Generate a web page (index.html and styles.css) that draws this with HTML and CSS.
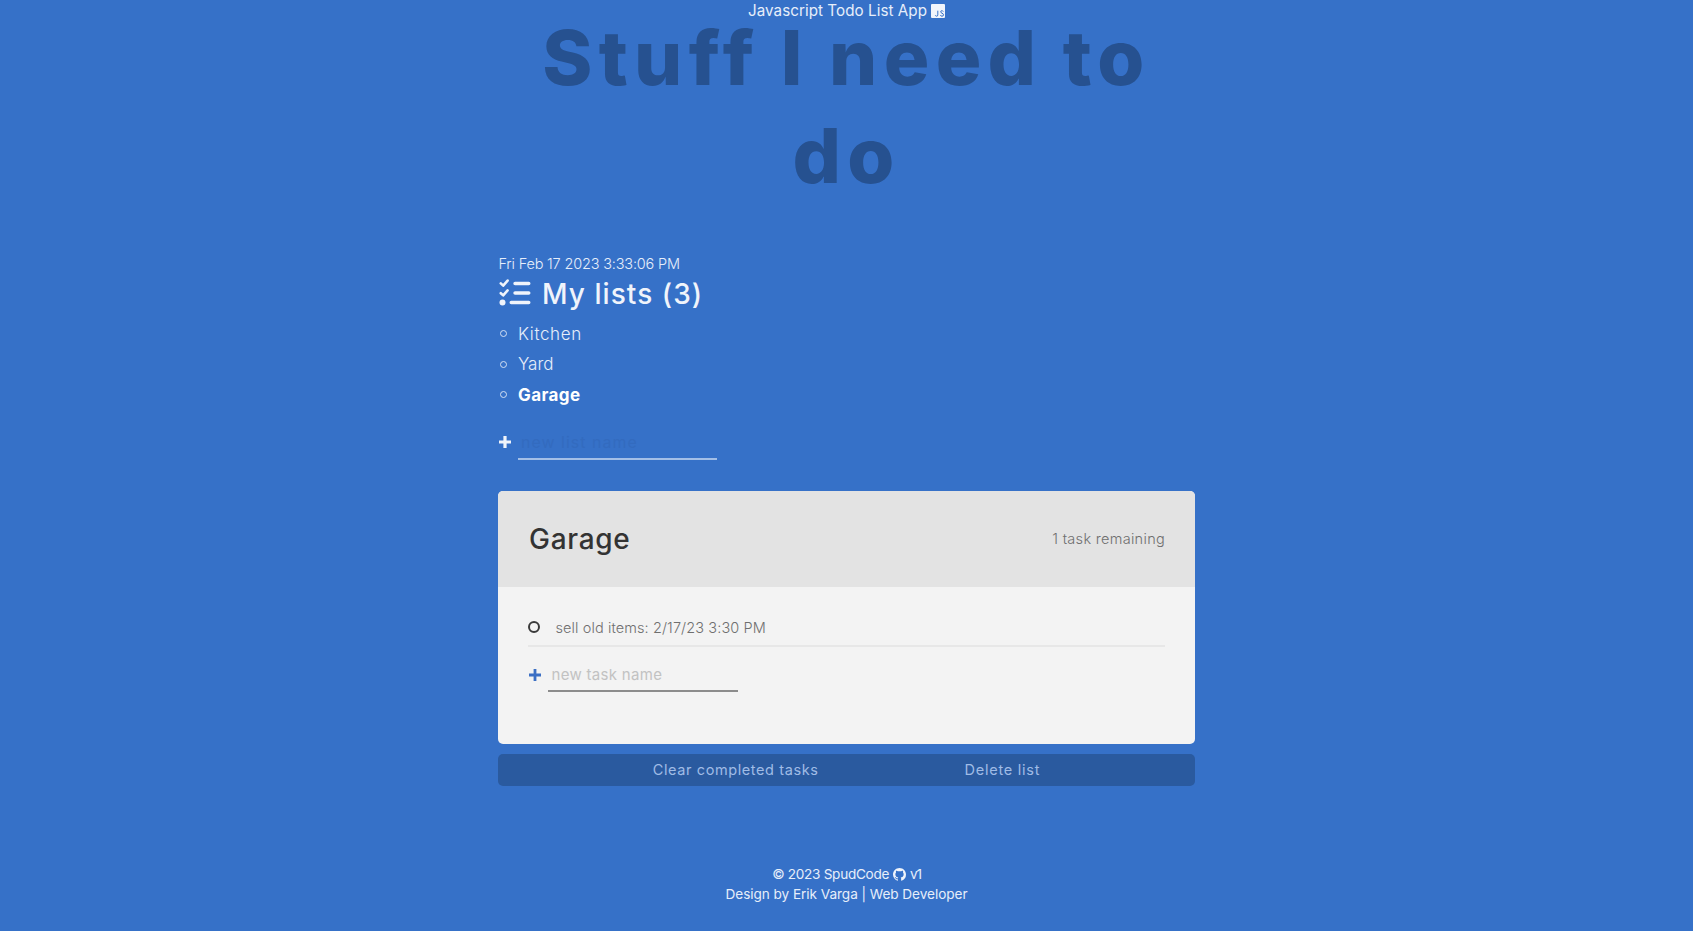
FILE: index.html
```html
<!DOCTYPE html>
<html lang="en">
<head>
<meta charset="utf-8">
<title>Javascript Todo List App</title>
<link rel="stylesheet" href="styles.css">
</head>
<body>
<header class="topbar"><span class="topbar-text">Javascript Todo List App</span><svg class="js-icon" viewBox="0 0 14 14"><path fill="#f0f4fb" d="M1 0h12a1 1 0 0 1 1 1v12a1 1 0 0 1-1 1H1a1 1 0 0 1-1-1V1a1 1 0 0 1 1-1z"/><path fill="none" stroke="#3672c9" stroke-width="1" d="M6.800 6.700v4.200q0 1.300-1.200 1.300-.9 0-1.300-.9M12.300 7.500q-.5-.8-1.400-.8-1.200 0-1.200 1.100 0 .9 1.300 1.400 1.500.5 1.500 1.600 0 1.400-1.500 1.400-1.200 0-1.700-1"/></svg></header>
<h1 class="title"><span class="title-line">Stuff I need to</span> <span class="title-line">do</span></h1>
<main class="main">
<section class="lists">
<p class="date"><span>Fri Feb 17 2023 3:33:06 PM</span></p>
<h2 class="lists-title"><svg class="list-icon" viewBox="0 0 32 28"><g fill="none" stroke="#f0f4fb" stroke-linecap="round" stroke-linejoin="round"><path stroke-width="2.600" d="M1.800 4.400l2.400 2.200 4.400-5M1.800 14.200l2.400 2.200 4.400-5"/><path stroke-width="3.600" d="M16.100 4.500h13.600M16.100 14h13.600M12.300 23.500h17.400"/></g><circle cx="3.500" cy="23.500" r="3" fill="#f0f4fb"/></svg><span>My lists (3)</span></h2>
<ul class="list-names"><li class="kitchen"><span>Kitchen</span></li><li><span>Yard</span></li><li class="active"><span>Garage</span></li></ul>
<form class="new-list"><svg class="plus" viewBox="0 0 12 12"><path d="M6 0v12M0 6h12"/></svg><div class="field"><span>new list name</span></div></form>
</section>
<section class="card">
<div class="card-head"><h2 class="card-title"><span>Garage</span></h2><p class="remaining"><span>1 task remaining</span></p></div>
<div class="card-body">
<div class="task"><i class="check"></i><span>sell old items: 2/17/23 3:30 PM</span></div>
<form class="new-task"><svg class="plus" viewBox="0 0 12 12"><path d="M6 0v12M0 6h12"/></svg><div class="field"><span>new task name</span></div></form>
</div>
</section>
<div class="actions"><span class="clear">Clear completed tasks</span><span class="delete">Delete list</span></div>
</main>
<footer class="footer"><p><span class="copyright">© 2023 SpudCode</span><svg class="github" viewBox="0 0 16 16"><path d="M8 0C3.580 0 0 3.580 0 8c0 3.540 2.290 6.530 5.470 7.590.4.070.55-.17.55-.38 0-.19-.01-.82-.01-1.490-2.010.37-2.530-.49-2.690-.94-.09-.23-.48-.94-.82-1.130-.28-.15-.68-.52-.01-.53.630-.01 1.080.58 1.230.82.720 1.210 1.870.87 2.330.66.070-.52.280-.87.510-1.070-1.780-.2-3.640-.89-3.640-3.950 0-.87.310-1.590.82-2.150-.08-.2-.36-1.020.08-2.120 0 0 .67-.21 2.200.82a7.600 7.600 0 0 1 4 0c1.530-1.040 2.200-.82 2.200-.82.440 1.100.16 1.920.08 2.120.51.560.82 1.270.82 2.150 0 3.070-1.870 3.750-3.650 3.950.29.250.54.73.54 1.480 0 1.070-.01 1.930-.01 2.200 0 .21.150.46.550.38A8 8 0 0 0 16 8c0-4.420-3.580-8-8-8z"/></svg><span class="version">v1</span></p><p><span>Design by Erik Varga | Web Developer</span></p></footer>
</body>
</html>
```
FILE: styles.css
```css
* { box-sizing: border-box; margin: 0; padding: 0; }
body {
  background: #3671c8;
  font-family: Inter, "Open Sans", sans-serif;
  color: #e6eefa;
  height: 931px;
  overflow: hidden;
}
span { white-space: nowrap; }

.topbar { display: flex; justify-content: center; height: 22px; font-size: 15.2px; line-height: 21px; }
.topbar-text { letter-spacing: .05px; }
.js-icon { width: 14px; height: 14px; margin: 4px 0 0 4px; }

.title {
  height: 196px;
  margin-top: -14px;
  color: #265190;
  font-size: 76px;
  line-height: 98px;
  font-weight: 800;
  letter-spacing: 6.3px;
  word-spacing: -2.5px;
  text-align: center;
}
.title-line { display: table; margin: 0 auto; }

.main { width: 697px; margin: 50px auto 0; }
.date { font-size: 14.5px; line-height: 20px; font-weight: 300; letter-spacing: -.18px; padding-left: .5px; }
.lists-title {
  display: flex;
  gap: 11px;
  margin: 2px 0 0 1px;
  font-size: 28px;
  font-weight: 500;
  line-height: 36px;
  letter-spacing: 1.05px;
  color: #f0f4fb;
}
.list-icon { width: 32px; height: 28px; margin-top: 2.5px; }

.list-names { list-style: none; margin-top: 6.5px; font-size: 17px; line-height: 30.6px; font-weight: 300; }
.list-names li { display: flex; align-items: center; padding-left: 1.500px; }
.list-names li::before { content: ""; box-sizing: border-box; width: 7px; height: 7px; margin-right: 11.500px; border: 1.300px solid #d3e0f4; border-radius: 50%; }
.list-names .kitchen { letter-spacing: .6px; }
.list-names .active { font-weight: 700; color: #fff; letter-spacing: .4px; }

.plus { width: 12px; height: 12px; flex: none; }
.new-list, .new-task { display: flex; align-items: flex-start; }
.new-list { margin-top: 22px; padding-left: 1px; font-size: 16px; line-height: 20px; }
.new-list .plus { margin-top: 4px; stroke: #f0f4fb; stroke-width: 3.200; }
.new-list .field { width: 199px; margin-left: 7px; padding: 0 0 5.700px 3px; border-bottom: 2px solid #a3bfe7; color: #336bbf; letter-spacing: 1px; }

.card { height: 253px; margin-top: 31px; border-radius: 5px; background: #f3f3f3; color: #333; overflow: hidden; }
.card-head { display: flex; justify-content: space-between; align-items: center; height: 95.700px; padding: 0 30px 0 31px; background: #e3e3e3; }
.card-title { font-size: 28px; font-weight: 500; letter-spacing: .7px; }
.remaining, .task { font-size: 14.500px; font-weight: 300; color: #6f6f6f; }
.remaining { letter-spacing: .3px; }
.card-body { padding: 23.200px 30px 0; }
.task { display: flex; align-items: center; height: 37.100px; border-bottom: 2px solid #e7e7e7; letter-spacing: .1px; }
.check { width: 12px; height: 12px; margin: 0 15.500px 1px 0; border: 2.400px solid #3a3a3a; border-radius: 50%; }
.new-task { margin-top: 17px; padding-left: 1px; font-size: 15px; line-height: 21px; }
.new-task .plus { margin-top: 5px; stroke: #3b6fc4; stroke-width: 2.800; }
.new-task .field { width: 190px; margin-left: 7px; padding: 0 0 5px 3.500px; border-bottom: 2px solid #8c8c8c; color: #c2c2c2; letter-spacing: .3px; }

.actions {
  display: flex;
  justify-content: center;
  align-items: center;
  gap: 146px;
  height: 32.500px;
  padding-bottom: 1px;
  margin-top: 10px;
  border-radius: 5px;
  background: #2a5a9f;
  color: #a0bce6;
  font-size: 14.500px;
}
.clear { letter-spacing: .6px; }
.delete { letter-spacing: .75px; }

.footer { display: flex; flex-direction: column; align-items: center; margin-top: 78.500px; font-size: 13.600px; line-height: 19.700px; }
.footer p { display: flex; letter-spacing: -.05px; }
.footer .copyright { letter-spacing: -.3px; }
.github { width: 13px; height: 13px; margin: 3px 4px 0; fill: #f0f4fb; }
.footer .version { letter-spacing: -1.200px; }
```
